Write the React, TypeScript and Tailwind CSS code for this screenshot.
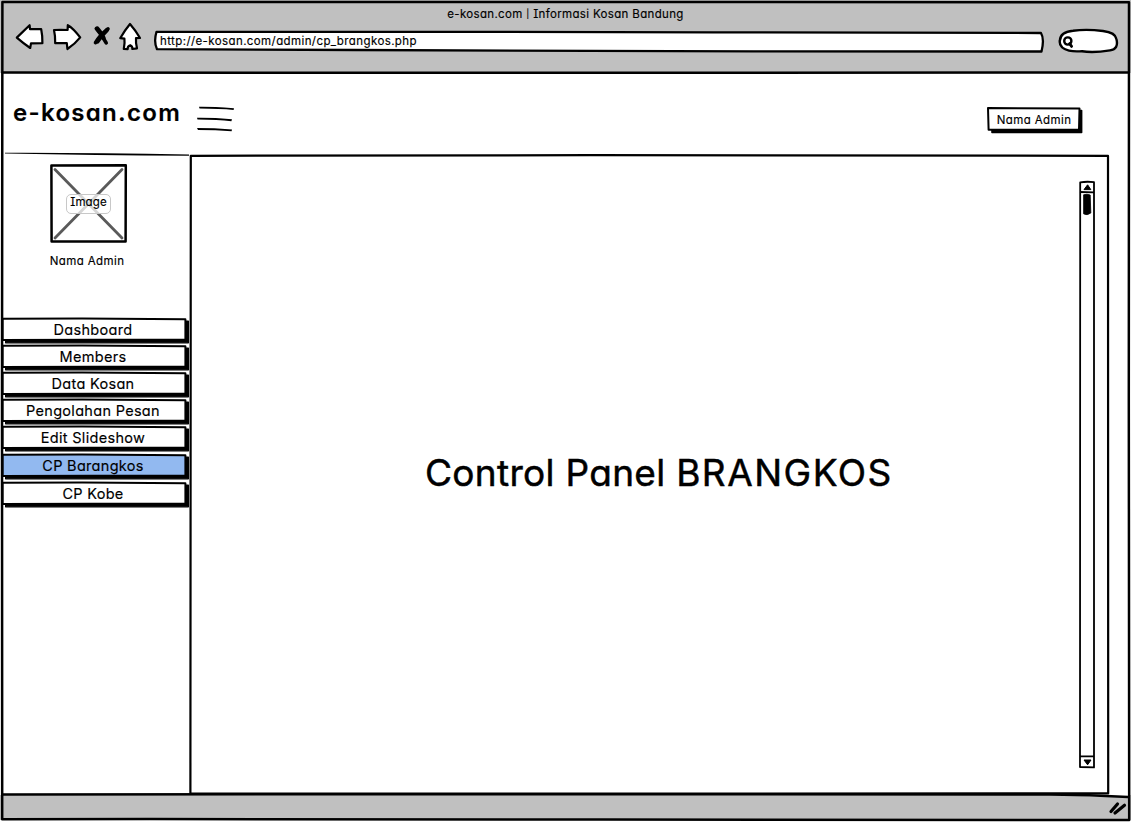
import type { ReactNode } from "react";

const font =
  "font-['Inter','Liberation_Sans',sans-serif] [font-feature-settings:'cv11','cv08','ss03'] [-webkit-text-stroke:0.15px_black]";

function Ink({ children }: { children: ReactNode }) {
  return (
    <svg
      className="pointer-events-none absolute inset-0 h-full w-full overflow-visible"
      fill="none"
      stroke="black"
      strokeWidth="2.5"
      strokeLinecap="round"
      strokeLinejoin="round"
      aria-hidden="true"
    >
      {children}
    </svg>
  );
}

function NavIcons() {
  return (
    <svg
      width="128"
      height="32"
      viewBox="14 21 128 32"
      fill="white"
      stroke="black"
      strokeWidth="2.2"
      strokeLinejoin="round"
      strokeLinecap="round"
      aria-hidden="true"
    >
      <path d="M16.8 37.6 L29.6 25.2 L30 29.2 L41.2 29.2 Q42.6 36 42.4 43.2 L31 43.4 L30.2 48 Q23 43 16.8 37.6Z" />
      <path d="M54 30 Q61 29.6 67.6 30 L67.8 25.2 Q73 28 80.2 37.4 Q75 44 67.4 49 L66.8 43 L55.2 43.2 Q55.4 36 54 30Z" />
      <path d="M96.3 28.5 Q102 35 106.2 42.8 M108 28.8 Q99 36 95.5 42.6" strokeWidth="3.6" />
      <path d="M97.4 28.6 Q102 34 103.6 38 M107 30 Q101 36 97.4 41.5" strokeWidth="4.2" />
      <path d="M130 24 Q136 31 140 38 L136 38.2 Q135.6 43 137 48.4 L132.4 49 Q132.6 46 130.2 45.2 Q127.4 46 127.6 49.2 L123.8 49 Q125 43 124.4 38.6 L120.2 38.2 Q125 30 130 24Z" />
    </svg>
  );
}

function BrowserBar() {
  return (
    <header className="relative h-[73px] bg-[#c0c0c0]">
      <div className="flex h-[21px] items-center justify-center pt-[6px] text-[11.5px] leading-4">
        <span className="whitespace-nowrap tracking-[0.34px]">
          e-kosan.com <span className="align-[1px] text-[9px] leading-none">|</span> Informasi Kosan Bandung
        </span>
      </div>
      <div className="flex pl-[14px]">
        <NavIcons />
        <div className="relative mt-[10px] ml-[12px] h-[21px] w-[890px] pl-[6px] text-[11.5px] leading-[20px]">
          <Ink>
            <path
              d="M2.5 .8 L300 .8 L560 1.3 L887 2 Q890.6 8 887.5 20.5 L600 20.4 L200 19 L3 18.2 Q-.5 11 2.5 .8Z"
              fill="white"
              strokeWidth="2.3"
            />
          </Ink>
          <span className="relative whitespace-nowrap tracking-[0.4px]">
            http://e-kosan.com/admin/cp_brangkos.php
          </span>
        </div>
        <svg
          className="mt-[6px] ml-[13px]"
          width="62"
          height="27"
          viewBox="1057 27 62 27"
          fill="white"
          stroke="black"
          strokeWidth="2.4"
          strokeLinejoin="round"
          aria-hidden="true"
        >
          <path d="M1069 50.6 Q1059 48 1059.8 41 Q1060 32 1073 30.8 Q1086 28.8 1103 31 Q1115.5 32.6 1116.4 39 Q1119 49 1110 50.4 Q1093 53 1082 51.2 Q1074 51.8 1069 50.6Z" />
          <circle cx="1067.8" cy="41" r="3.6" />
          <path d="M1069.6 43.6 L1071.6 46.4" strokeWidth="2.8" strokeLinecap="round" />
        </svg>
      </div>
    </header>
  );
}

function SiteHeader() {
  return (
    <div className="relative flex h-[81px] pl-[13px]">
      <h1 className="mt-[23px] w-[169px] whitespace-nowrap text-[24px] leading-[34px] font-semibold tracking-[1.3px]">
        e-kosan.com
      </h1>
      <svg
        className="mt-[31px] ml-[15px]"
        width="37"
        height="30"
        viewBox="197 104 37 30"
        fill="black"
        aria-hidden="true"
      >
        <path d="M199 106.8 Q211 106.6 234 108.2 L233.6 110 Q220 108.8 199.5 108.6Z" />
        <path d="M197 117.8 Q213 117.6 232 119.2 L231.4 121.2 Q218 120 197.5 119.6Z" />
        <path d="M197 128 Q214 128 232 129.4 L231.6 131.2 Q216 130 198 130Z" />
      </svg>
      <button className="relative mt-[34px] ml-[753px] h-[26px] w-[96px] text-center text-[11.5px] leading-[23px]">
        <Ink>
          <path d="M5 3.5 H94.6 V25.4 H5Z" fill="black" strokeWidth="1.6" />
          <path d="M1 1 L92.5 1.6 L92 22.6 L1.6 22.8Z" fill="white" strokeWidth="2" />
        </Ink>
        <span className="relative -left-[1px] whitespace-nowrap tracking-[0.4px]">Nama Admin</span>
      </button>
    </div>
  );
}

const menu = [
  { label: "Dashboard", gap: "mt-0" },
  { label: "Members", gap: "mt-[2px]" },
  { label: "Data Kosan", gap: "mt-[2px]" },
  { label: "Pengolahan Pesan", gap: "mt-[2px]" },
  { label: "Edit Slideshow", gap: "mt-[2px]" },
  { label: "CP Barangkos", gap: "mt-[3px]", active: true },
  { label: "CP Kobe", gap: "mt-[3px]" },
];

function Sidebar() {
  return (
    <aside className="relative w-[190px] shrink-0">
      <svg
        className="absolute top-[-2px] left-[5px]"
        width="184"
        height="4"
        viewBox="0 0 184 4"
        aria-hidden="true"
      >
        <path d="M0 .8 Q90 .6 184 2.6 L184 3.8 Q90 3.4 0 1.6Z" />
      </svg>
      <div className="relative mt-[10px] ml-[50px] flex h-[79px] w-[77px] items-center justify-center">
        <Ink>
          <path d="M1.4 1.4 L75.8 1.2 L75.6 77.4 L1.6 77.6Z" />
          <path d="M5 5.5 L72 74 M72 5.5 L5 74" stroke="#5a5a5a" strokeWidth="2.8" />
        </Ink>
        <span className="relative flex h-[20px] w-[45px] items-center justify-center rounded-[5px] border border-[#c8c8c8] bg-white/75 pb-[1px] text-[11.5px] tracking-[0.1px]">
          Image
        </span>
      </div>
      <p className="mt-[10px] w-[174px] text-center text-[11.5px] leading-4 tracking-[0.4px]">
        Nama Admin
      </p>
      <nav className="mt-[49px] ml-[2px]">
        {menu.map((item) => (
          <a
            key={item.label}
            className={`${item.gap} relative block h-[25px] w-[182px] text-center text-[14.5px] leading-[23px]`}
          >
            <Ink>
              <path d="M3.6 3 H186.4 V24.8 H3.6Z" fill="black" strokeWidth="1.2" />
              <path
                d="M.6 .7 L80 .6 L183.4 1.2 L183.4 21.6 L.6 21.9Z"
                fill={item.active ? "#92b9f0" : "white"}
                strokeWidth="2"
              />
            </Ink>
            <span className="relative whitespace-nowrap tracking-[0.3px]">{item.label}</span>
          </a>
        ))}
      </nav>
    </aside>
  );
}

function ScrollBar() {
  return (
    <svg
      className="mt-[26px] mr-[13px]"
      width="17"
      height="589"
      viewBox="1079 180 17 589"
      fill="none"
      stroke="black"
      strokeWidth="1.8"
      strokeLinejoin="round"
      aria-hidden="true"
    >
      <path d="M1080.2 182.4 Q1087 181.2 1094 182.2 L1094 767.4 L1080 767 Q1080.6 400 1080.2 182.4Z" />
      <path d="M1080 192 L1094 192.4 M1080 756.4 H1094" />
      <path d="M1087.6 184.8 L1090.8 189.6 H1084Z" fill="black" strokeWidth="1" />
      <path d="M1083.6 194.8 Q1087 193.6 1090.2 195 L1090.8 213 Q1087 216 1083.6 213.8Z" fill="black" strokeWidth=".8" />
      <path d="M1084 760 H1091 L1087.6 764.8Z" fill="black" strokeWidth="1" />
    </svg>
  );
}

export default function App() {
  return (
    <div
      className={`relative flex h-[822px] w-[1131px] flex-col overflow-hidden bg-white text-black ${font}`}
    >
      <BrowserBar />
      <SiteHeader />
      <div className="flex h-[641px]">
        <Sidebar />
        <main className="relative flex w-[919px] items-start justify-between">
          <Ink>
            <path d="M.8 1.8 L400 1.2 L918 1.8 Q918.4 300 918.2 639.4 L.4 639.6 Q.2 300 .8 1.8Z" strokeWidth="2.2" />
          </Ink>
          <h2 className="mt-[293px] ml-[235px] whitespace-nowrap text-[37px] leading-[52px] font-normal tracking-[0.3px] [-webkit-text-stroke:0.5px_black]">
            Control Panel <span className="tracking-[1.5px]">BRANGKOS</span>
          </h2>
          <ScrollBar />
        </main>
      </div>
      <footer className="flex h-[25px] items-center justify-end bg-[#c0c0c0] pr-[4px]">
        <svg width="19" height="16" viewBox="0 0 19 16" stroke="black" strokeWidth="3.2" strokeLinecap="round" aria-hidden="true">
          <path d="M3 11.5 L9.5 4 M7 13 L16.5 5.2" />
        </svg>
      </footer>
      <Ink>
        <path d="M1050 795 L1128 795 L1128 797.6Z" fill="white" stroke="none" />
        <path d="M2.4 2 L600 2 L1129 2.2 L1128.8 400 L1129.2 820 L600 819.6 L150 819 L2.2 819.2 L2 400Z" />
        <path d="M2.5 72.5 L500 72.8 L1128 72.4" />
        <path d="M2.5 794.4 L600 794.2 L1050 794.4 Q1090 794.8 1128 797" />
      </Ink>
    </div>
  );
}
